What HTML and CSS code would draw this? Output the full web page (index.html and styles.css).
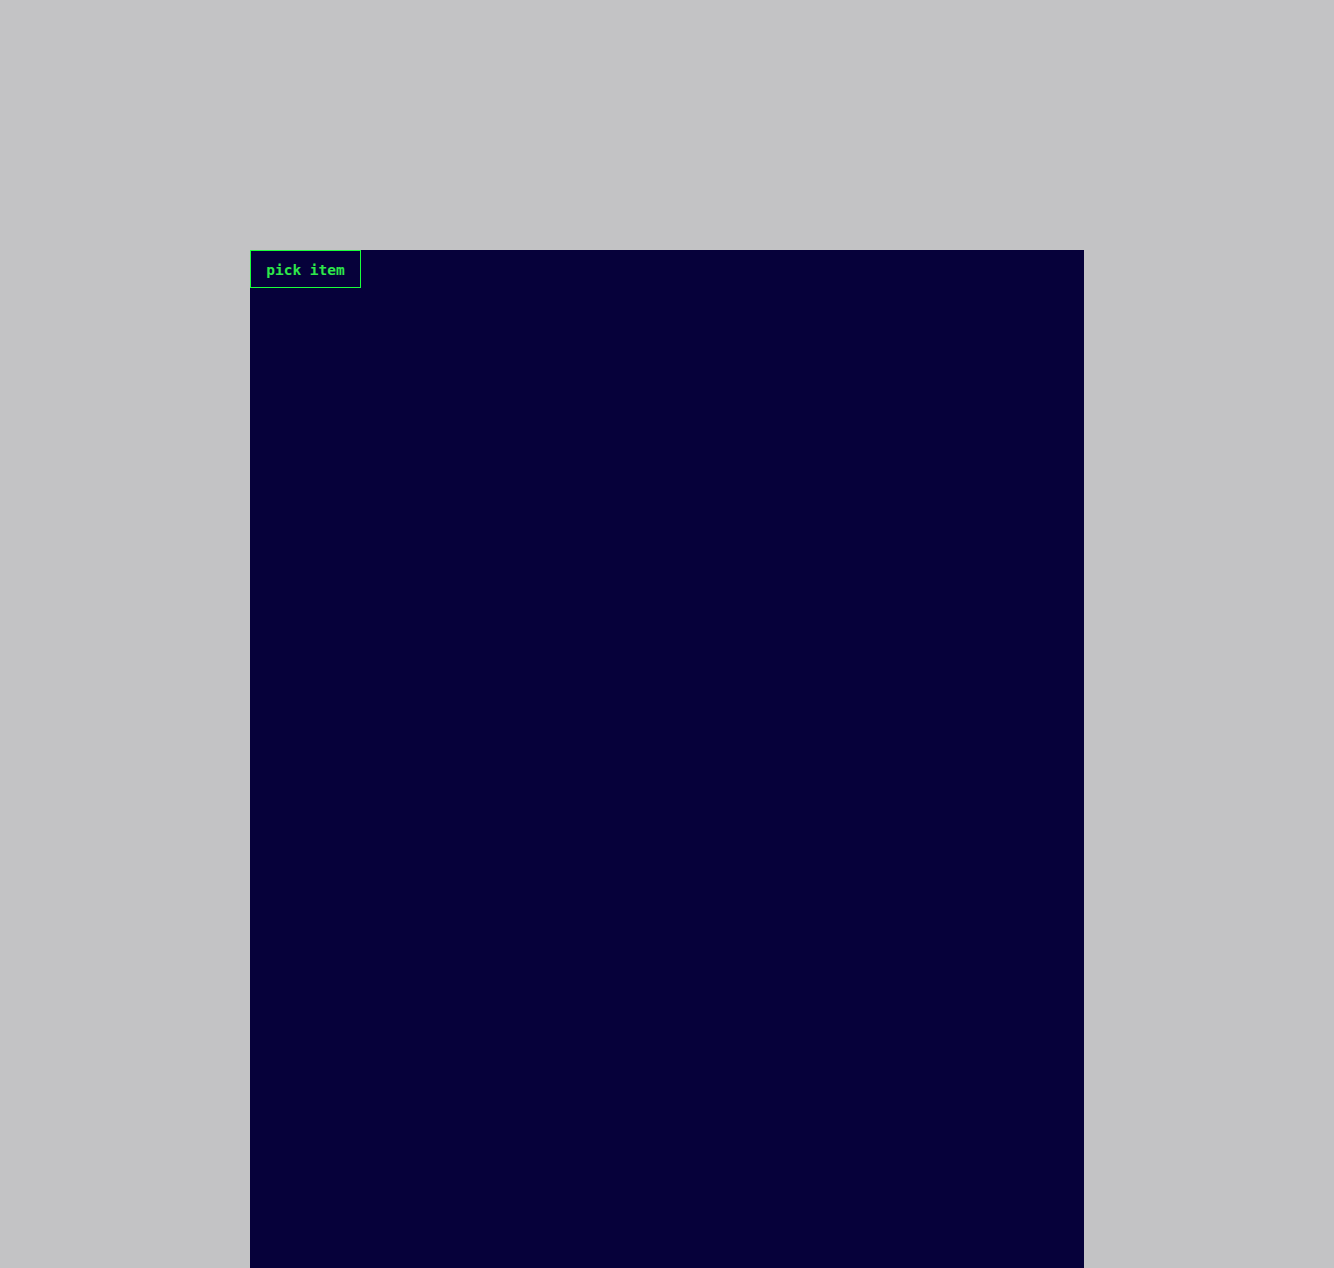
FILE: index.html
```html
<!DOCTYPE html>
<html>
<head>
<meta charset="utf-8">
<link rel="stylesheet" href="styles.css">
</head>
<body>
<main class="panel">
  <button class="pick">pick item</button>
</main>
</body>
</html>
```
FILE: styles.css
```css
html, body {
  margin: 0;
  padding: 0;
  height: 100%;
}
body {
  background: #c3c3c5;
  padding-top: 250px;
  box-sizing: border-box;
  overflow: hidden;
}
.panel {
  width: 834px;
  height: 1018px;
  margin-left: 250px;
  background: #06013a;
  display: flex;
  align-items: flex-start;
}
.pick {
  height: 38px;
  width: 111px;
  box-sizing: border-box;
  padding: 1px 0 0;
  background: transparent;
  border: 1px solid #1aff3a;
  color: #2ee84a;
  font-family: "DejaVu Sans Mono", monospace;
  font-size: 14.5px;
  font-weight: bold;
  cursor: pointer;
}
```
